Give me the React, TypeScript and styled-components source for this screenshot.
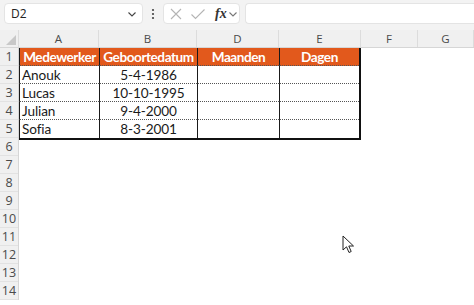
import React from "react";
import styled, { createGlobalStyle } from "styled-components";

const GlobalStyle = createGlobalStyle`
  html, body {
    margin: 0;
    padding: 0;
    background: #ffffff;
  }
  * {
    box-sizing: border-box;
  }
`;

const COLS = "80px 98px 82px 82px 57px 1fr";
const ORANGE = "#e2591c";

const Window = styled.div`
  position: relative;
  width: 474px;
  height: 305px;
  overflow: hidden;
  background: #ffffff;
  font-family: "Open Sans", "Noto Sans", sans-serif;
`;

const Toolbar = styled.div`
  display: flex;
  align-items: center;
  height: 30px;
  padding: 3px 0 6px 4px;
  background: #f3f3f3;
`;

const Field = styled.div<{ $width?: number; $open?: boolean }>`
  display: flex;
  align-items: center;
  height: 21px;
  width: ${(p) => (p.$width ? `${p.$width}px` : "auto")};
  flex: ${(p) => (p.$width ? "none" : "1")};
  background: #ffffff;
  border: 1px solid #e4e4e4;
  border-right: ${(p) => (p.$open ? "none" : "1px solid #e4e4e4")};
  border-radius: ${(p) => (p.$open ? "4px 0 0 4px" : "4px")};
`;

const NameText = styled.span`
  flex: 1;
  padding-left: 6px;
  font-size: 12px;
  color: #222;
`;

const Dots = styled.div`
  width: 20px;
  display: flex;
  justify-content: center;
  align-items: center;
`;

const Gap = styled.span`
  width: 5px;
`;

const Fx = styled.span`
  font-family: "Liberation Serif", serif;
  font-style: italic;
  font-weight: bold;
  font-size: 14px;
  color: #333;
  margin: 0 1px 0 9px;
`;

const ColHeaders = styled.div`
  display: grid;
  grid-template-columns: 19px ${COLS};
  height: 18px;
  background: #f0f0f0;
  border-bottom: 1px solid #d6d6d6;
`;

const Corner = styled.div`
  display: flex;
  align-items: flex-end;
  justify-content: flex-end;
  padding: 0 2px 2px 0;
  border-right: 1px solid #dcdcdc;
`;

const ColLetter = styled.div`
  display: flex;
  align-items: center;
  justify-content: center;
  font-size: 11.5px;
  color: #4a4a4a;
  border-right: 1px solid #dcdcdc;
`;

const Sheet = styled.div`
  display: grid;
  grid-template-columns: 19px 1fr;
  align-items: start;
`;

const RowHeaders = styled.div`
  display: flex;
  flex-direction: column;
  background: #f0f0f0;
  border-right: 1px solid #d6d6d6;
`;

const RowNumber = styled.div`
  height: 18px;
  flex: none;
  display: flex;
  align-items: center;
  justify-content: center;
  font-size: 12.5px;
  color: #4a4a4a;
  border-bottom: 1px solid #e2e2e2;
`;

const Table = styled.div`
  display: grid;
  grid-template-columns: 80px 98px 82px 80px;
  grid-auto-rows: 18px;
  width: max-content;
  border-right: 2px solid #111;
  border-bottom: 2px solid #111;
  font-family: "Lato", "Liberation Sans", sans-serif;
  font-size: 13.6px;
`;

const Cell = styled.div<{ $head?: boolean; $align?: "left" | "center"; $last?: boolean }>`
  display: flex;
  align-items: center;
  justify-content: ${(p) => (p.$align === "left" ? "flex-start" : "center")};
  padding-left: ${(p) => (p.$align === "left" ? "2px" : "0")};
  background: ${(p) => (p.$head ? ORANGE : "#ffffff")};
  color: ${(p) => (p.$head ? "#ffffff" : "#1a1a1a")};
  font-weight: ${(p) => (p.$head ? 700 : 400)};
  letter-spacing: ${(p) => (p.$head ? "-0.45px" : "-0.1px")};
  border-left: 1px solid #1a1a1a;
  border-bottom: ${(p) => (p.$last ? "none" : "1px dotted #555")};
  white-space: nowrap;
  overflow: hidden;
`;

const Cursor = styled.svg`
  position: absolute;
  left: 342px;
  top: 235px;
`;

const Chevron = ({ color = "#555" }: { color?: string }) => (
  <svg width="10" height="10" viewBox="0 0 10 10">
    <path d="M1.5 3.5 L5 7 L8.5 3.5" fill="none" stroke={color} strokeWidth="1.1" />
  </svg>
);

const rows = [
  ["Anouk", "5-4-1986"],
  ["Lucas", "10-10-1995"],
  ["Julian", "9-4-2000"],
  ["Sofia", "8-3-2001"],
];

export default function App() {
  return (
    <Window>
      <GlobalStyle />
      <Toolbar>
        <Field $width={139}>
          <NameText>D2</NameText>
          <span style={{ marginRight: 5, display: "flex" }}>
            <Chevron color="#444" />
          </span>
        </Field>
        <Dots>
          <svg width="4" height="12" viewBox="0 0 4 12">
            <circle cx="2" cy="2" r="1.1" fill="#444" />
            <circle cx="2" cy="6" r="1.1" fill="#444" />
            <circle cx="2" cy="10" r="1.1" fill="#444" />
          </svg>
        </Dots>
        <Field $width={77}>
          <svg width="14" height="14" viewBox="0 0 14 14" style={{ marginLeft: 5 }}>
            <path d="M2 2 L12 12 M12 2 L2 12" stroke="#b4b4b4" strokeWidth="1.1" fill="none" />
          </svg>
          <svg width="16" height="14" viewBox="0 0 16 14" style={{ marginLeft: 7 }}>
            <path d="M1.5 7.5 L5.5 11.5 L14.5 2.5" stroke="#b4b4b4" strokeWidth="1.1" fill="none" />
          </svg>
          <Fx>fx</Fx>
          <Chevron color="#777" />
        </Field>
        <Gap />
        <Field $open />
      </Toolbar>
      <ColHeaders>
        <Corner>
          <svg width="10" height="10" viewBox="0 0 10 10">
            <path d="M10 0 L10 10 L0 10 Z" fill="#c8c8c8" />
          </svg>
        </Corner>
        {["A", "B", "D", "E", "F", "G"].map((c) => (
          <ColLetter key={c}>{c}</ColLetter>
        ))}
      </ColHeaders>
      <Sheet>
        <RowHeaders>
          {Array.from({ length: 14 }, (_, i) => (
            <RowNumber key={i}>{i + 1}</RowNumber>
          ))}
        </RowHeaders>
        <Table>
          <Cell $head>Medewerker</Cell>
          <Cell $head>Geboortedatum</Cell>
          <Cell $head>Maanden</Cell>
          <Cell $head>Dagen</Cell>
          {rows.map(([name, date], i) => {
            const last = i === rows.length - 1;
            return (
              <React.Fragment key={name}>
                <Cell $align="left" $last={last}>{name}</Cell>
                <Cell $last={last}>{date}</Cell>
                <Cell $last={last} />
                <Cell $last={last} />
              </React.Fragment>
            );
          })}
        </Table>
      </Sheet>
      <Cursor width="13" height="19" viewBox="0 0 13 19">
        <path
          d="M1 1 L1 15 L4.5 11.8 L7 17.5 L9.2 16.5 L6.8 11 L11.5 11 Z"
          fill="#ffffff"
          stroke="#222"
          strokeWidth="1"
          strokeLinejoin="round"
        />
      </Cursor>
    </Window>
  );
}
